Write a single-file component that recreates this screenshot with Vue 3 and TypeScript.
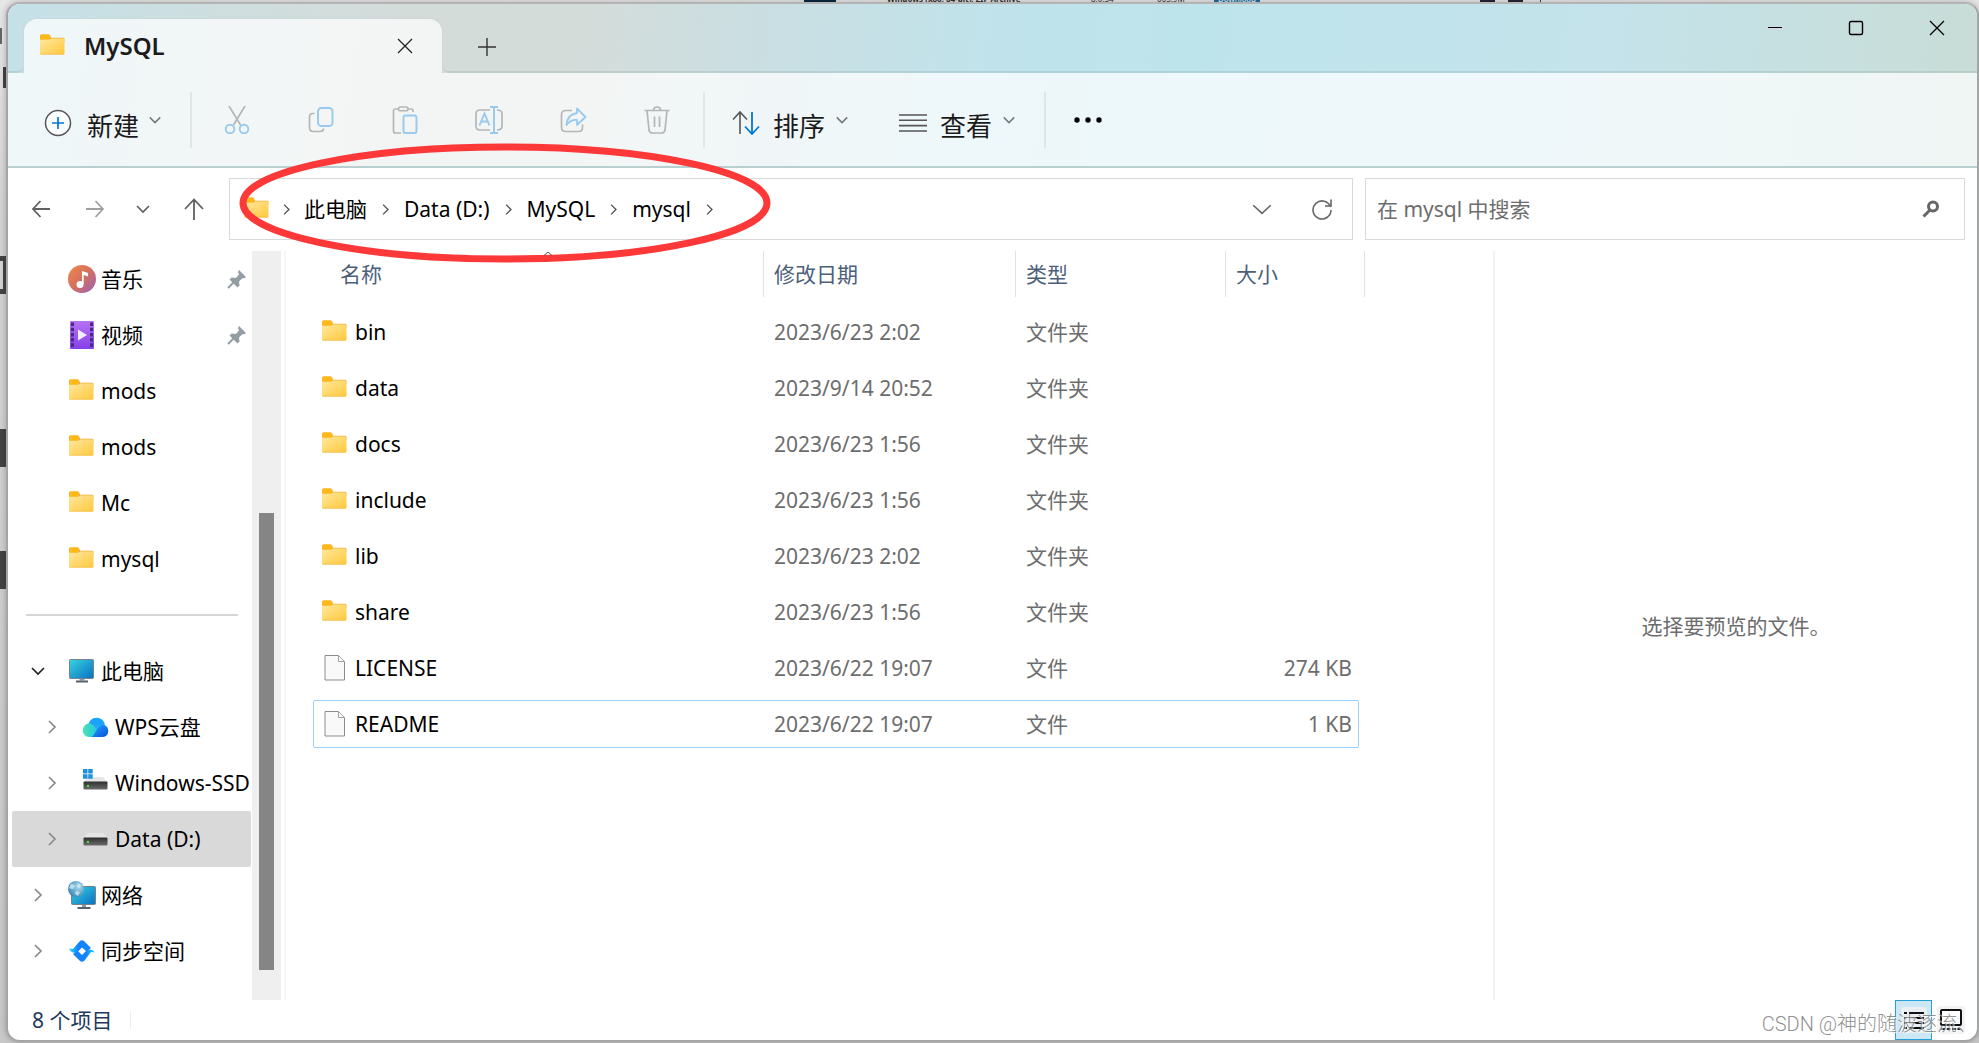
<script setup lang="ts">
import { ref } from 'vue'

interface TreeItem {
  label: string
  icon: string
  level: number
  expander?: 'open' | 'closed'
  pinned?: boolean
}

interface FileEntry {
  name: string
  modified: string
  type: string
  size: string
  icon: 'folder' | 'file'
}

const quickAccess: TreeItem[] = [
  { label: '音乐', icon: 'music', level: 0, pinned: true },
  { label: '视频', icon: 'video', level: 0, pinned: true },
  { label: 'mods', icon: 'folder', level: 0 },
  { label: 'mods', icon: 'folder', level: 0 },
  { label: 'Mc', icon: 'folder', level: 0 },
  { label: 'mysql', icon: 'folder', level: 0 },
]

const locations: TreeItem[] = [
  { label: '此电脑', icon: 'computer', level: 0, expander: 'open' },
  { label: 'WPS云盘', icon: 'cloud', level: 1, expander: 'closed' },
  { label: 'Windows-SSD', icon: 'system-drive', level: 1, expander: 'closed' },
  { label: 'Data (D:)', icon: 'drive', level: 1, expander: 'closed' },
  { label: '网络', icon: 'network', level: 0, expander: 'closed' },
  { label: '同步空间', icon: 'sync', level: 0, expander: 'closed' },
]

const files: FileEntry[] = [
  { name: 'bin', modified: '2023/6/23 2:02', type: '文件夹', size: '', icon: 'folder' },
  { name: 'data', modified: '2023/9/14 20:52', type: '文件夹', size: '', icon: 'folder' },
  { name: 'docs', modified: '2023/6/23 1:56', type: '文件夹', size: '', icon: 'folder' },
  { name: 'include', modified: '2023/6/23 1:56', type: '文件夹', size: '', icon: 'folder' },
  { name: 'lib', modified: '2023/6/23 2:02', type: '文件夹', size: '', icon: 'folder' },
  { name: 'share', modified: '2023/6/23 1:56', type: '文件夹', size: '', icon: 'folder' },
  { name: 'LICENSE', modified: '2023/6/22 19:07', type: '文件', size: '274 KB', icon: 'file' },
  { name: 'README', modified: '2023/6/22 19:07', type: '文件', size: '1 KB', icon: 'file' },
]

const crumbs: string[] = ['此电脑', 'Data (D:)', 'MySQL', 'mysql']
const tools: string[] = ['cut', 'copy', 'paste', 'rename', 'share', 'delete']

const query = ref('')
const selectedLocation = ref('Data (D:)')
const focusedFile = ref('README')
</script>

<template>
  <div class="desktop">
    <svg class="sprite" aria-hidden="true">
      <defs>
        <linearGradient id="g-folder" x1="0" y1="0" x2="1" y2="1">
          <stop offset="0" stop-color="#ffe8a0" /><stop offset="1" stop-color="#ffc83a" />
        </linearGradient>
        <linearGradient id="g-music" x1="0" y1="0" x2="1" y2="1">
          <stop offset="0" stop-color="#f08a4f" /><stop offset=".5" stop-color="#d3705f" /><stop offset="1" stop-color="#9a5fc0" />
        </linearGradient>
        <linearGradient id="g-video" x1="0" y1="0" x2="0" y2="1">
          <stop offset="0" stop-color="#b573f5" /><stop offset="1" stop-color="#8440e6" />
        </linearGradient>
        <linearGradient id="g-screen" x1="0" y1="0" x2="1" y2="1">
          <stop offset="0" stop-color="#35d4e0" /><stop offset="1" stop-color="#0b6fc2" />
        </linearGradient>
        <linearGradient id="g-cloud-l" x1="0" y1="0" x2="1" y2="0">
          <stop offset="0" stop-color="#45e6b0" /><stop offset="1" stop-color="#18b4ff" />
        </linearGradient>
        <linearGradient id="g-cloud-r" x1="0" y1="0" x2="1" y2="1">
          <stop offset="0" stop-color="#1fa5ff" /><stop offset="1" stop-color="#0a4fd8" />
        </linearGradient>
        <linearGradient id="g-drive" x1="0" y1="0" x2="0" y2="1">
          <stop offset="0" stop-color="#2e2e2e" /><stop offset="1" stop-color="#6b6b6b" />
        </linearGradient>
        <linearGradient id="g-sync" x1="0" y1="0" x2="1" y2="0">
          <stop offset="0" stop-color="#22dcff" /><stop offset=".4" stop-color="#1284ff" /><stop offset="1" stop-color="#1284ff" />
        </linearGradient>
        <linearGradient id="g-sync-b" x1="0" y1="0" x2="1" y2="0">
          <stop offset="0" stop-color="#1284ff" /><stop offset=".6" stop-color="#1284ff" /><stop offset="1" stop-color="#22dcff" />
        </linearGradient>
        <radialGradient id="g-globe" cx=".65" cy=".35" r=".8">
          <stop offset="0" stop-color="#a8dcf0" /><stop offset="1" stop-color="#2f7ba8" />
        </radialGradient>
      </defs>

      <symbol id="folder" viewBox="0 1.500 28 28">
        <path d="M1 5.500q0-1.500 1.500-1.500h7q1 0 1.600 1l1 2.200H24.500q1 0 1 1v3H1z" fill="#f0b03a" />
        <path d="M1 9h9.500l2-1h12q1 0 1 1V23q0 1-1 1H2q-1 0-1-1z" fill="url(#g-folder)" />
        <path d="M1 5.500q0-1.500 1.500-1.500h7q1.600.2 1.900 2.300-.3 2.500-2 2.700H1z" fill="#fcb919" />
        <path d="M1.500 23.700h23.500" stroke="#f0ba4c" stroke-width=".7" />
      </symbol>
      <symbol id="file" viewBox="0 0 28 28">
        <path d="M4 1.500h13.500l6 6v18.500h-19.500z" fill="#f9f9f9" stroke="#8c8c8c" />
        <path d="M17.500 1.500v6h6z" fill="#fff" stroke="#a0a0a0" />
      </symbol>
      <symbol id="music" viewBox="0 0 28 28">
        <circle cx="14" cy="14" r="14" fill="url(#g-music)" />
        <circle cx="12" cy="19.500" r="3.500" fill="#fff" />
        <path d="M14 19V6l6 2v3.500L15.700 10V19z" fill="#fff" />
      </symbol>
      <symbol id="video" viewBox="0 0 28 28">
        <rect x="2" y="0" width="24" height="28" rx="1" fill="url(#g-video)" />
        <path d="M4.500 1.500v26M23.500 1.500v26" stroke="#4a2a80" stroke-width="3" stroke-dasharray="3.500 1.700" />
        <path d="M10 8.500v11l9-5.500z" fill="#f3eefb" />
      </symbol>
      <symbol id="computer" viewBox="0 0 28 28">
        <path d="M11.500 20h5v3.500h-5z" fill="#8b98a5" />
        <rect x="1.500" y="2.500" width="24" height="19" rx="1" fill="url(#g-screen)" stroke="#77838c" />
        <path d="M8 24.500h12" stroke="#56616b" stroke-width="2" />
      </symbol>
      <symbol id="cloud" viewBox="0 0 28 28">
        <path d="M7 24a6.800 6.800 0 0 1-.5-13.500A9 9 0 0 1 17 5q6 2 6 8l-8 11z" fill="url(#g-cloud-l)" />
        <path d="M7 10a8 8 0 0 1 15.300 2.200q-5-.8-8.300 3.300Q11.500 11 7 10z" fill="#1ea2ff" />
        <path d="M10 24q2.500-2.500 4.500-7 3-5.500 7.500-5a6.200 6.200 0 0 1-1 12z" fill="url(#g-cloud-r)" />
      </symbol>
      <symbol id="drive" viewBox="0 0 28 28">
        <path d="M6 8h15l4.500 5h-24z" fill="#e4e5e7" />
        <rect x="1.500" y="12.500" width="24" height="8" rx="1" fill="url(#g-drive)" />
        <circle cx="6" cy="17" r="1.200" fill="#4fe04a" />
      </symbol>
      <symbol id="system-drive" viewBox="0 0 28 28">
        <path d="M6 8h15l4.500 5h-24z" fill="#e4e5e7" />
        <rect x="1.500" y="12.500" width="24" height="8" rx="1" fill="url(#g-drive)" />
        <circle cx="6" cy="17" r="1.200" fill="#4fe04a" />
        <path d="M1 0h4.500v4.500H1zM6.200 0h4.500v4.500H6.200zM1 5.200h4.500v4.500H1zM6.200 5.200h4.500v4.500H6.200z" fill="#1e90dc" />
      </symbol>
      <symbol id="network" viewBox="0 0 28 28">
        <path d="M14 22h4v4h-4z" fill="#8b98a5" />
        <rect x="3.500" y="5.500" width="24" height="18" rx="1" fill="url(#g-screen)" stroke="#77838c" />
        <path d="M9.500 27h13" stroke="#56616b" stroke-width="2" />
        <circle cx="8" cy="8" r="8" fill="url(#g-globe)" />
        <path d="M3 3q3 0 4 2l-2 3q-3 0-4-1M10 2l3 2-1 3-3-1zM8 10l4 1-2 4-3-2z" fill="#d6eef8" opacity=".75" />
      </symbol>
      <symbol id="sync" viewBox="0 0 28 28">
        <path d="M1 11.500l4 .5L11.500 4.500q2.500-2.500 5 0L23 11l-4.500 3.500L14 10.500 9 15.500Q3.500 17 1 11.500z" fill="url(#g-sync)" />
        <path d="M27 15.500l-4-.5-6.500 8.500q-2.500 2.500-5 0L5 17l4.500-3.500L14 18l5-5q5.500-1.500 8 2.500z" fill="url(#g-sync-b)" />
      </symbol>
      <symbol id="pin" viewBox="0 0 20 20">
        <path d="M12 1l7 7-2 1.500-1.500-.5-3.500 3.500.5 4-2 2L2.500 10.500l2-2 4.500.5L12 5.500l-1-2.500z" fill="#929da4" />
        <path d="M7 13l-6 6" stroke="#929da4" stroke-width="2" />
      </symbol>
      <symbol id="chevron-right" viewBox="0 0 16 16">
        <path d="M5 2l6 6-6 6" fill="none" stroke="currentColor" stroke-width="1.700" />
      </symbol>
      <symbol id="chevron-down" viewBox="0 0 16 16">
        <path d="M2 5l6 6 6-6" fill="none" stroke="currentColor" stroke-width="1.700" />
      </symbol>

      <symbol id="cut" viewBox="0 0 28 28">
        <path d="M6 0l11.500 19M22 0L10.500 19" fill="none" stroke="#b4b6b8" stroke-width="1.700" />
        <circle cx="7" cy="23" r="4.300" fill="none" stroke="#99c9ec" stroke-width="1.900" />
        <circle cx="21" cy="23" r="4.300" fill="none" stroke="#99c9ec" stroke-width="1.900" />
      </symbol>
      <symbol id="copy" viewBox="0 0 28 28">
        <path d="M7.500 7.500H6q-3.500 0-3.500 3.500v10.500q0 4 4 4H13q3.500 0 3.500-3" fill="none" stroke="#b4b6b8" stroke-width="1.700" />
        <rect x="11" y="2" width="14.500" height="18" rx="3.500" fill="none" stroke="#99c9ec" stroke-width="1.900" />
      </symbol>
      <symbol id="paste" viewBox="0 0 28 28">
        <path d="M7 3H4.500Q2.500 3 2.500 5v20q0 2 2 2H10M17 3h3q2 0 2 2v1" fill="none" stroke="#b4b6b8" stroke-width="1.700" />
        <rect x="7.500" y="1" width="9.500" height="3.800" rx="1.900" fill="none" stroke="#b4b6b8" stroke-width="1.600" />
        <rect x="12.500" y="9.500" width="13" height="17.500" rx="2" fill="none" stroke="#99c9ec" stroke-width="1.900" />
      </symbol>
      <symbol id="rename" viewBox="0 0 28 28">
        <path d="M15 4H5Q1 4 1 8v12q0 4 4 4h10M22 4q5 0 5 4v12q0 4-5 4" fill="none" stroke="#b4b6b8" stroke-width="1.700" />
        <path d="M4.500 19.500l5-12 5 12M6.500 15.500h6M15 1h8M19 1v26M15 27h8" fill="none" stroke="#99c9ec" stroke-width="1.900" />
      </symbol>
      <symbol id="share" viewBox="0 0 28 28">
        <path d="M13 4.500H7q-4.500 0-4.500 4v13q0 4 4.500 4h12.500q4 0 4-4v-3" fill="none" stroke="#b4b6b8" stroke-width="1.700" />
        <path d="M18 2.500l8.500 8.500-8.500 8v-5q-6.500-.5-10.500 5 .5-10.500 10.500-12z" fill="none" stroke="#99c9ec" stroke-width="1.800" stroke-linejoin="round" />
      </symbol>
      <symbol id="delete" viewBox="0 0 28 28">
        <path d="M1.500 4.500h25M10.500 4.500q0-3.500 3.500-3.500t3.500 3.500M4 4.500l2 19.500q.5 3 3.500 3h9q3 0 3.500-3l2-19.500M11.500 10.500v10.500M16.500 10.500v10.500" fill="none" stroke="#b4b6b8" stroke-width="1.700" />
      </symbol>
    </svg>

    <div class="backdrop" aria-hidden="true">
      <div class="page-top">
        <span class="block"></span>
        <span class="archive">Windows (x86, 64-bit), ZIP Archive</span>
        <span class="version">8.0.34</span>
        <span class="weight">065.9M</span>
        <span class="download">Download</span>
        <span class="figure"></span>
        <span class="figure"></span>
        <span class="rule"></span>
      </div>
      <div class="page-left">
        <span class="mark slash"></span>
        <span class="mark stem"></span>
        <span class="mark hook"></span>
        <span class="mark bar"></span>
        <span class="mark bar lower"></span>
      </div>
    </div>

    <main class="window">
      <header class="chrome">
        <div class="tabstrip">
          <span class="strip-start"></span>
          <div class="tab">
            <svg class="ic28"><use href="#folder" /></svg>
            <h1 class="tab-title">MySQL</h1>
            <button class="tab-close" type="button" aria-label="关闭标签页">
              <svg width="16" height="16" viewBox="0 0 16 16"><path d="M1 1l14 14M15 1L1 15" stroke="#222" stroke-width="1.300" /></svg>
            </button>
          </div>
          <div class="strip-rest">
            <button class="tab-add" type="button" aria-label="新标签页">
              <svg width="18" height="18" viewBox="0 0 18 18"><path d="M9 0v18M0 9h18" stroke="#333" stroke-width="1.400" /></svg>
            </button>
            <div class="controls">
              <button type="button" aria-label="最小化"><svg width="16" height="16" viewBox="0 0 16 16"><path d="M1 7.500h14" stroke="#000" /></svg></button>
              <button type="button" aria-label="最大化"><svg width="16" height="16" viewBox="0 0 16 16"><rect x="1.500" y="1.500" width="13" height="13" rx="1.500" fill="none" stroke="#000" stroke-width="1.400" /></svg></button>
              <button type="button" aria-label="关闭"><svg width="16" height="16" viewBox="0 0 16 16"><path d="M1 1l14 14M15 1L1 15" stroke="#000" stroke-width="1.300" /></svg></button>
            </div>
          </div>
        </div>

        <div class="toolbar">
          <button class="command new" type="button">
            <svg class="command-icon" width="28" height="28" viewBox="0 0 28 28"><circle cx="14" cy="14" r="12.500" fill="#fafcfd" stroke="#555" stroke-width="1.500" /><path d="M14 8v12M8 14h12" stroke="#0078d4" stroke-width="1.700" /></svg>
            <span class="command-label">新建</span>
            <svg class="caret"><use href="#chevron-down" /></svg>
          </button>
          <span class="divider"></span>
          <button v-for="tool in tools" :key="tool" class="tool" type="button" :aria-label="tool" disabled>
            <svg class="ic28"><use :href="'#' + tool" /></svg>
          </button>
          <span class="divider"></span>
          <button class="command sort" type="button">
            <svg class="command-icon" width="28" height="24" viewBox="0 0 28 24"><path d="M8 23V1M1 8.500L8 1l7 7.500" fill="none" stroke="#555" stroke-width="1.600" /><path d="M20 1v22M13 15.500l7 7.500 7-7.500" fill="none" stroke="#0078d4" stroke-width="1.800" /></svg>
            <span class="command-label">排序</span>
            <svg class="caret"><use href="#chevron-down" /></svg>
          </button>
          <button class="command view" type="button">
            <svg class="command-icon" width="28" height="24" viewBox="0 0 28 24"><path d="M0 4h28M0 9.300h28M0 14.600h28M0 20h28" stroke="#555" stroke-width="1.600" /></svg>
            <span class="command-label">查看</span>
            <svg class="caret"><use href="#chevron-down" /></svg>
          </button>
          <span class="divider"></span>
          <button class="more" type="button" aria-label="更多">
            <svg width="28" height="8" viewBox="0 0 28 8"><circle cx="3" cy="4" r="2.700" /><circle cx="14" cy="4" r="2.700" /><circle cx="25" cy="4" r="2.700" /></svg>
          </button>
        </div>
      </header>

      <div class="navigation">
        <button class="nav-button" type="button" aria-label="后退">
          <svg width="20" height="18" viewBox="0 0 20 18"><path d="M19 9H2M9.500 1L2 9l7.500 8" fill="none" stroke="#606060" stroke-width="1.800" /></svg>
        </button>
        <button class="nav-button" type="button" aria-label="前进">
          <svg width="20" height="18" viewBox="0 0 20 18"><path d="M1 9h17M10.500 1L18 9l-7.500 8" fill="none" stroke="#a0a0a0" stroke-width="1.800" /></svg>
        </button>
        <button class="nav-button recent" type="button" aria-label="最近位置">
          <svg class="ic16"><use href="#chevron-down" /></svg>
        </button>
        <button class="nav-button up" type="button" aria-label="向上">
          <svg width="20" height="22" viewBox="0 0 20 22"><path d="M10 22V2M1 11l9-9.500 9 9.500" fill="none" stroke="#606060" stroke-width="1.800" /></svg>
        </button>

        <nav class="address" aria-label="路径">
          <svg class="ic28"><use href="#folder" /></svg>
          <svg class="crumb-chevron root"><use href="#chevron-right" /></svg>
          <template v-for="crumb in crumbs" :key="crumb">
            <button class="crumb" type="button">{{ crumb }}</button>
            <svg class="crumb-chevron"><use href="#chevron-right" /></svg>
          </template>
          <button class="address-action history" type="button" aria-label="历史记录">
            <svg width="20" height="20" viewBox="0 0 16 16"><path d="M1 5l7 6.500L15 5" fill="none" stroke="currentColor" stroke-width="1.300" /></svg>
          </button>
          <button class="address-action" type="button" aria-label="刷新">
            <svg width="22" height="22" viewBox="0 0 22 22"><path d="M19.500 9A9 9 0 1 0 20 12M20 1.500V8h-6" fill="none" stroke="#666" stroke-width="1.600" /></svg>
          </button>
          <svg class="highlight" viewBox="0 0 532 120" aria-hidden="true"><ellipse cx="266" cy="60" rx="262" ry="56" fill="none" stroke="#fc3938" stroke-width="7" /></svg>
        </nav>

        <label class="search">
          <input v-model="query" type="text" aria-label="搜索" placeholder="在 mysql 中搜索" />
          <svg width="18" height="18" viewBox="0 0 18 18"><circle cx="11" cy="6.500" r="4.500" fill="none" stroke="#666" stroke-width="3" /><path d="M8 10L1.500 16.500" stroke="#666" stroke-width="3" /></svg>
        </label>
      </div>

      <div class="body">
        <aside class="sidebar">
          <ul class="tree">
            <li v-for="(item, index) in quickAccess" :key="index">
              <button class="node" type="button">
                <svg class="ic16"></svg>
                <svg class="ic28 node-icon"><use :href="'#' + item.icon" /></svg>
                <span class="node-label">{{ item.label }}</span>
                <svg v-if="item.pinned" class="pin"><use href="#pin" /></svg>
              </button>
            </li>
          </ul>
          <hr class="tree-rule" />
          <ul class="tree">
            <li v-for="item in locations" :key="item.label">
              <button
                class="node"
                :class="{ nested: item.level === 1, selected: item.label === selectedLocation }"
                type="button"
                @click="selectedLocation = item.label"
              >
                <svg class="ic16 expander" :class="item.expander"><use :href="item.expander === 'open' ? '#chevron-down' : '#chevron-right'" /></svg>
                <svg class="ic28 node-icon"><use :href="'#' + item.icon" /></svg>
                <span class="node-label">{{ item.label }}</span>
              </button>
            </li>
          </ul>
        </aside>
        <div class="scrollbar"><span class="thumb"></span></div>

        <section class="files">
          <table>
            <colgroup>
              <col class="c-name" /><col class="c-date" /><col class="c-type" /><col class="c-size" />
            </colgroup>
            <thead>
              <tr>
                <th scope="col">
                  <div class="head first">
                    名称
                    <svg class="sort-mark" viewBox="0 0 10 5"><path d="M1 4.500L5 1l4 3.500" fill="none" stroke="#555" /></svg>
                  </div>
                </th>
                <th scope="col"><div class="head">修改日期</div></th>
                <th scope="col"><div class="head">类型</div></th>
                <th scope="col"><div class="head">大小</div></th>
              </tr>
            </thead>
            <tbody>
              <tr v-for="file in files" :key="file.name" :class="{ focused: file.name === focusedFile }" @click="focusedFile = file.name">
                <td class="name">
                  <div class="name-cell">
                    <svg class="ic28"><use :href="'#' + file.icon" /></svg>
                    <span>{{ file.name }}</span>
                  </div>
                </td>
                <td>{{ file.modified }}</td>
                <td>{{ file.type }}</td>
                <td class="size">{{ file.size }}</td>
              </tr>
            </tbody>
          </table>
        </section>

        <section class="preview"><p>选择要预览的文件。</p></section>
      </div>

      <footer class="status">
        <span class="count">8 个项目</span>
        <span class="status-divider"></span>
        <div class="view-modes">
          <button class="mode active" type="button" aria-label="详细信息">
            <svg width="26" height="26" viewBox="0 0 26 26"><rect width="26" height="26" rx="3" fill="#e9eff3" /><path d="M3 6h3M8 6h15M3 11h3M8 11h15M3 16h3M8 16h15M3 21h3M8 21h15" stroke="#111" stroke-width="1.800" /></svg>
          </button>
          <button class="mode" type="button" aria-label="大图标">
            <svg width="28" height="28" viewBox="0 0 28 28"><rect width="28" height="28" rx="3" fill="#f3f3f3" /><rect x="4" y="4" width="20" height="15" rx="1" fill="#fff" stroke="#111" stroke-width="2" /><path d="M4 23h20" stroke="#111" stroke-width="2" stroke-dasharray="4 1.500" /></svg>
          </button>
        </div>
        <span class="watermark">CSDN @神的随波逐流、</span>
      </footer>
    </main>
  </div>
</template>

<style>
body {
  margin: 0;
}
</style>

<style scoped>
.desktop {
  position: relative;
  display: flex;
  box-sizing: border-box;
  min-height: 100vh;
  padding: 2px 0 1px 6px;
  background: linear-gradient(#e6e6e6, #d4d4d4 20%, #c8c8c8);
  font-family: "Noto Sans", "Noto Sans CJK SC", sans-serif;
  font-size: 21px;
  line-height: 28px;
  color: #000;
  overflow: hidden;
}
.sprite {
  position: absolute;
  width: 0;
  height: 0;
}
button {
  display: flex;
  align-items: center;
  justify-content: center;
  margin: 0;
  padding: 0;
  border: 0;
  background: none;
  color: inherit;
  font: inherit;
}
svg {
  flex: none;
}
.ic28 {
  width: 28px;
  height: 28px;
}
.ic16 {
  width: 16px;
  height: 16px;
}

.backdrop {
  position: absolute;
  inset: 0;
}
.page-top {
  position: absolute;
  inset: 0 0 auto 0;
  display: flex;
  height: 4px;
  padding-left: 804px;
  overflow: hidden;
  font-size: 8px;
  line-height: 10px;
  color: #333;
}
.page-top span {
  flex: none;
  height: 10px;
  margin-top: -6px;
}
.page-top .block {
  width: 32px;
  background: #0b2a40;
}
.page-top .archive {
  width: 204px;
  margin-left: 51px;
  font-weight: 700;
  white-space: nowrap;
}
.page-top .version {
  width: 66px;
}
.page-top .weight {
  width: 57px;
}
.page-top .download {
  width: 46px;
  background: #1e6f9f;
  color: #fff;
  text-align: center;
}
.page-top .figure {
  width: 15px;
  margin-left: 13px;
  background: #252536;
}
.page-top .download + .figure {
  margin-left: 220px;
}
.page-top .rule {
  width: 1px;
  margin-left: 17px;
  background: #1a4670;
}
.page-left {
  display: flex;
  flex-direction: column;
  width: 8px;
  padding-top: 28px;
}
.mark {
  display: block;
  background: #444;
}
.slash {
  width: 2px;
  height: 16px;
  background: #666;
}
.stem {
  width: 5px;
  height: 21px;
  margin: 23px 0 0 3px;
}
.hook {
  box-sizing: border-box;
  width: 8px;
  height: 38px;
  margin-top: 168px;
  border: 5px solid #444;
  border-left: 0;
  background: none;
}
.bar {
  width: 6px;
  height: 38px;
  margin-top: 135px;
}
.bar.lower {
  margin-top: 84px;
}

.window {
  position: relative;
  display: flex;
  flex: 1;
  flex-direction: column;
  min-width: 0;
  border: 2px solid #a3a5a6;
  border-top-color: #b4b4b4;
  border-radius: 14px;
  background: #fff;
  box-shadow: 0 0 6px rgba(0, 0, 0, 0.25);
}

.chrome {
  border-bottom: 2px solid #b9cfd0;
  border-radius: 12px 12px 0 0;
  background: linear-gradient(98deg, #c5e0e6 2%, #cfdedf 11%, #d4dcda 20%, #d4dcda 29%, #cbdee1 37%, #c0e3eb 50%, #bee4eb 60%, #c4e3eb 80%, #c8ddd8 98%);
}
.tabstrip {
  display: flex;
  height: 69px;
}
.strip-start {
  width: 15px;
  box-sizing: border-box;
  border-bottom: 2px solid rgba(120, 150, 150, 0.2);
  border-bottom-right-radius: 6px;
}
.tab {
  display: flex;
  align-items: center;
  box-sizing: border-box;
  width: 420px;
  margin-top: 14px;
  padding: 0 29px 0 15px;
  border: 1px solid rgba(120, 150, 155, 0.3);
  border-bottom: 0;
  border-radius: 14px 14px 0 0;
  background: rgba(255, 255, 255, 0.72);
}
.tab-title {
  flex: 1;
  margin: 0 0 0 17px;
  font-size: 24px;
  font-weight: 600;
  line-height: 32px;
  color: #1b1b1b;
}
.strip-rest {
  display: flex;
  flex: 1;
  justify-content: space-between;
  border-bottom: 2px solid rgba(120, 150, 150, 0.2);
  border-bottom-left-radius: 6px;
}
.tab-add {
  width: 88px;
  padding-top: 19px;
}
.controls {
  display: flex;
  height: 48px;
}
.controls button {
  width: 81px;
}
.toolbar {
  display: flex;
  align-items: center;
  height: 93px;
  background: rgba(255, 255, 255, 0.72);
}
.command {
  color: #1b1b1b;
}
.command-icon {
  margin-top: 6px;
}
.command-label {
  padding-top: 12px;
  font-size: 26px;
  line-height: 36px;
}
.caret {
  width: 14px;
  height: 14px;
  margin-left: 9px;
  color: #777;
}
.new {
  padding: 0 28px 0 36px;
}
.new .command-label {
  margin-left: 15px;
}
.sort {
  padding-left: 27px;
}
.view {
  padding: 0 28px 0 50px;
}
.sort .command-label,
.view .command-label {
  margin-left: 13px;
}
.sort .caret,
.view .caret {
  margin-left: 10px;
}
.divider {
  width: 2px;
  height: 56px;
  background: #e0e5e7;
}
.tool {
  width: 84px;
}
.divider + .tool {
  margin-left: 3px;
}
.tool + .divider {
  margin-left: 4px;
}
.more {
  width: 84px;
}

.navigation {
  display: flex;
  align-items: center;
  height: 62px;
  padding: 10px 12px 11px 6px;
}
.nav-button {
  flex: none;
  width: 54px;
  color: #606060;
}
.recent {
  width: 42px;
}
.up {
  width: 60px;
  margin-right: 5px;
}
.address,
.search {
  position: relative;
  display: flex;
  align-items: center;
  box-sizing: border-box;
  height: 62px;
  border: 1px solid #d9d9d9;
}
.address {
  flex: 33 1 0;
  padding: 0 16px 0 13px;
}
.crumb-chevron {
  width: 13px;
  height: 13px;
  margin: 0 12px;
  color: #555;
}
.crumb-chevron.root {
  margin: 0 11px 0 9px;
}
.address-action {
  width: 28px;
  color: #666;
}
.history {
  margin: 0 32px 0 auto;
}
.highlight {
  position: absolute;
  left: 9px;
  top: -36px;
  width: 532px;
  height: 120px;
  pointer-events: none;
}
.search {
  flex: 17 1 0;
  margin-left: 12px;
  padding: 0 24px 0 11px;
}
.search input {
  flex: 1;
  min-width: 0;
  padding: 0;
  border: 0;
  outline: 0;
  background: none;
  color: #000;
  font: inherit;
}
.search input::placeholder {
  color: #6d6d6d;
  opacity: 1;
}

.body {
  display: flex;
  flex: 1;
}
.sidebar {
  flex: none;
  box-sizing: border-box;
  width: 244px;
  padding: 0 1px 0 4px;
}
.tree {
  margin: 0;
  padding: 0;
  list-style: none;
}
.node {
  justify-content: flex-start;
  width: 100%;
  height: 56px;
  padding: 0 4px 0 18px;
  border-radius: 2px;
  overflow: hidden;
}
.node.nested {
  padding: 0 0 0 32px;
}
.node.selected {
  background: #d9d9d9;
}
.node-icon {
  margin: 0 5px 0 22px;
}
.node-label {
  white-space: nowrap;
}
.expander {
  color: #8a8a8a;
}
.expander.open {
  color: #222;
}
.pin {
  width: 20px;
  height: 20px;
  margin-left: auto;
}
.tree-rule {
  height: 2px;
  margin: 27px 13px 27px 14px;
  border: 0;
  background: #d6d6d6;
}
.scrollbar {
  display: grid;
  grid-template-rows: 35fr 61fr 4fr;
  flex: none;
  justify-content: center;
  width: 29px;
  background: #efefef;
}
.thumb {
  grid-row: 2;
  width: 15px;
  background: #858585;
}
.files {
  flex: 1;
  min-width: 0;
  margin-left: 3px;
  padding-left: 27px;
  border-left: 2px solid #f6f6f6;
}
table {
  width: 1052px;
  border-collapse: collapse;
  table-layout: fixed;
  color: #6d6d6d;
}
.c-name {
  width: 451px;
}
.c-date {
  width: 252px;
}
.c-type {
  width: 210px;
}
.c-size {
  width: 139px;
}
th {
  height: 53px;
  padding: 0;
  vertical-align: top;
  color: #4c607a;
  font-weight: 400;
  text-align: left;
}
.head {
  position: relative;
  box-sizing: border-box;
  height: 46px;
  padding-left: 10px;
  border-right: 1px solid #e2e2e2;
  line-height: 46px;
}
.head.first {
  padding-left: 27px;
}
.sort-mark {
  position: absolute;
  left: 51%;
  top: 0;
  width: 10px;
  height: 5px;
}
td {
  height: 56px;
  padding: 0 0 0 10px;
}
td.name {
  padding-left: 8px;
  color: #000;
}
td.size {
  padding-right: 13px;
  text-align: right;
}
.name-cell {
  display: flex;
  align-items: center;
  gap: 6px;
}
.focused {
  position: relative;
}
.focused::after {
  content: "";
  position: absolute;
  inset: 4px 6px 4px 0;
  border: 1px solid #99d1ff;
  border-radius: 2px;
  pointer-events: none;
}
.preview {
  display: flex;
  flex: none;
  align-items: center;
  justify-content: center;
  width: 482px;
  border-left: 2px solid #f3f3f3;
  color: #6d6d6d;
}
.preview p {
  margin: 0;
}

.status {
  position: relative;
  display: flex;
  align-items: center;
  height: 40px;
  padding: 0 8px 0 24px;
  color: #1e395b;
}
.status-divider {
  width: 1px;
  height: 18px;
  margin-left: 18px;
  background: #ececec;
}
.view-modes {
  display: flex;
  height: 100%;
  margin-left: auto;
}
.mode {
  box-sizing: border-box;
  width: 37px;
  border: 1px solid transparent;
}
.mode.active {
  border-color: #26a0da;
  background: #cce8f6;
}
.watermark {
  position: absolute;
  right: 0;
  bottom: 2px;
  font-family: Roboto, "Noto Sans CJK SC", sans-serif;
  font-size: 20px;
  font-weight: 300;
  color: rgba(130, 130, 130, 0.9);
  text-shadow: 1px 1px 1px #fff;
  white-space: nowrap;
}
</style>
